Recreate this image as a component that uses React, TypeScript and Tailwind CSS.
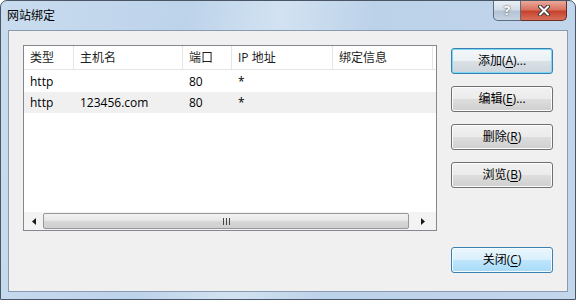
import React from 'react'

const columns = [
  { label: '类型', w: 'w-[50px]' },
  { label: '主机名', w: 'w-[109px]' },
  { label: '端口', w: 'w-[49px]' },
  { label: 'IP 地址', w: 'w-[101px]' },
  { label: '绑定信息', w: 'w-[100px]' },
]

const bindings = [
  ['http', '', '80', '*', ''],
  ['http', '123456.com', '80', '*', ''],
]

function Btn({
  label,
  hot,
  kind = 'normal',
}: {
  label: string
  hot: string
  kind?: 'normal' | 'default' | 'hover'
}) {
  const [before, after] = label.split('|')
  const skin =
    kind === 'default'
      ? 'border-[#3c7fb1] bg-[linear-gradient(#f4f8fb_0%,#ebf0f4_48%,#d9e0e6_52%,#cdd5dc_100%)] shadow-[inset_0_0_0_1px_#7ad7f5]'
      : kind === 'hover'
        ? 'border-[#3c7fb1] bg-[linear-gradient(#eaf6fd_0%,#d9f0fc_48%,#bee6fd_52%,#a7d9f5_100%)] shadow-[inset_0_0_0_1px_#f4fbfe]'
        : 'border-[#707070] bg-[linear-gradient(#f2f2f2_0%,#ebebeb_48%,#dddddd_52%,#cfcfcf_100%)] shadow-[inset_0_0_0_1px_#fcfcfc]'
  return (
    <div
      className={`flex h-[26px] w-[102px] items-center justify-center rounded-[3px] border text-[12px] text-black ${skin}`}
    >
      {before}(<span className="underline underline-offset-2">{hot}</span>){after}
    </div>
  )
}

function Scrollbar() {
  return (
    <div className="flex h-[18px] items-stretch bg-[#f3f3f3]">
      <div className="flex w-[19px] items-center justify-center">
        <svg width="4" height="7" viewBox="0 0 4 7">
          <path d="M4 0 L0 3.5 L4 7 Z" fill="#1a1a1a" />
        </svg>
      </div>
      <div className="my-[1px] flex flex-1 items-center justify-center rounded-[2px] border border-[#979797] bg-[linear-gradient(#f3f3f3_0%,#e8e8e8_45%,#d6d6d6_55%,#cfcfcf_100%)]">
        <div className="flex gap-[2px]">
          <div className="h-[7px] w-[1px] bg-[#444]" />
          <div className="h-[7px] w-[1px] bg-[#444]" />
          <div className="h-[7px] w-[1px] bg-[#444]" />
        </div>
      </div>
      <div className="flex w-[27px] items-center justify-center">
        <svg width="4" height="7" viewBox="0 0 4 7">
          <path d="M0 0 L4 3.5 L0 7 Z" fill="#1a1a1a" />
        </svg>
      </div>
    </div>
  )
}

function ListView() {
  return (
    <div className="flex h-[186px] w-[414px] flex-col overflow-hidden border border-[#828790] bg-white">
      <div className="flex h-[24px] border-b border-[#e5e5e5]">
        {columns.map(c => (
          <div
            key={c.label}
            className={`${c.w} flex shrink-0 items-center border-r border-[#e5e5e5] pl-[6px] text-[12px] text-[#1e1e1e]`}
          >
            {c.label}
          </div>
        ))}
      </div>
      {bindings.map((row, i) => (
        <div key={i} className={`flex h-[21px] ${i === 1 ? 'bg-[#f0f0f0]' : ''} ${i === 0 ? 'mt-[1px]' : ''}`}>
          {row.map((cell, j) => (
            <div
              key={j}
              className={`${columns[j]!.w} flex shrink-0 items-center pl-[6px] text-[12px] text-black`}
            >
              {cell}
            </div>
          ))}
        </div>
      ))}
      <div className="flex-1" />
      <Scrollbar />
    </div>
  )
}

export default function App() {
  return (
    <div
      className="relative flex h-[300px] w-[576px] flex-col overflow-hidden rounded-t-[7px] border border-[#4a5666] bg-[linear-gradient(100deg,#c9dcef_0%,#bdd3ea_30%,#d2e2f2_45%,#bcd2e9_60%,#c2d6ec_100%)]"
      style={{ fontFamily: '"Segoe UI", "Open Sans", "Noto Sans CJK SC", sans-serif' }}
    >
      <div className="flex h-[29px] shrink-0 items-start justify-between">
        <div className="pl-[6px] pt-[6px] text-[12px] text-black">网站绑定</div>
        <div className="mr-[8px] flex">
          <div className="flex h-[20px] w-[28px] items-center justify-center rounded-bl-[5px] border border-t-0 border-[#5d6c7e] bg-[linear-gradient(#e8eef5_0%,#d3dde8_45%,#b5c4d5_55%,#c5d3e2_100%)] text-[13px] font-bold text-white [text-shadow:0_0_2px_#333]">
            ?
          </div>
          <div className="flex h-[20px] w-[46px] items-center justify-center rounded-br-[5px] border border-l-0 border-t-0 border-[#6b2a23] bg-[linear-gradient(#e9a99b_0%,#d9735f_45%,#c7432f_55%,#d5705a_100%)]">
            <svg width="12" height="11" viewBox="0 0 12 11">
              <path d="M2 1.5 L10 9.5 M10 1.5 L2 9.5" stroke="#3b3b3b" strokeWidth="4" strokeLinecap="round" />
              <path d="M2 1.5 L10 9.5 M10 1.5 L2 9.5" stroke="#ffffff" strokeWidth="2" strokeLinecap="round" />
            </svg>
          </div>
        </div>
      </div>
      <div className="mx-[7px] flex h-[262px] shrink-0 border border-[#8a9bb0] bg-[#f0f0f0] pl-[14px] pt-[14px] pb-[18px]">
        <ListView />
        <div className="ml-[14px] flex flex-col pt-[3px]">
          <div className="flex flex-col gap-[12px]">
            <Btn label="添加|..." hot="A" kind="default" />
            <Btn label="编辑|..." hot="E" />
            <Btn label="删除|" hot="R" />
            <Btn label="浏览|" hot="B" />
          </div>
          <div className="mt-auto">
            <Btn label="关闭|" hot="C" kind="hover" />
          </div>
        </div>
      </div>
    </div>
  )
}
